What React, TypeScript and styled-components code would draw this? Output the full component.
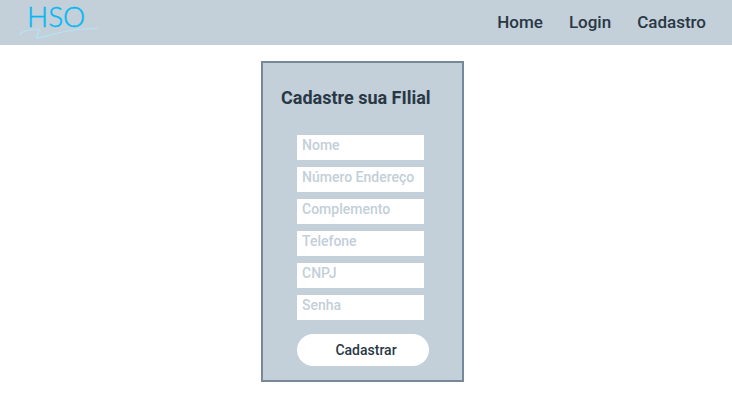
import React from "react";
import styled, { createGlobalStyle } from "styled-components";

const GlobalStyle = createGlobalStyle`
  *, *::before, *::after { box-sizing: border-box; }
  body {
    margin: 0;
    background: #ffffff;
    color: #293845;
    font-family: Roboto, "Liberation Sans", sans-serif;
  }
`;

const Header = styled.header`
  display: flex;
  align-items: center;
  justify-content: space-between;
  height: 45px;
  padding: 0 26px 0 18px;
  background: #c3cfd9;
`;

const LogoLink = styled.a`
  display: block;
  height: 45px;
`;

const Nav = styled.nav`
  display: flex;
  gap: 26px;
  padding-bottom: 2px;
`;

const NavLink = styled.a`
  color: #293845;
  font-size: 17px;
  font-weight: 500;
  line-height: 20px;
  text-decoration: none;
`;

const Main = styled.main`
  display: flex;
  justify-content: center;
  padding: 16px 7px 16px 0;
`;

const Card = styled.form`
  display: flex;
  flex-direction: column;
  align-items: flex-start;
  padding: 24px 33px 14px 34px;
  border: 2px solid #778899;
  background: #c3cfd9;
`;

const Title = styled.h1`
  width: 148px;
  margin: 0 0 26px -16px;
  font-size: 18px;
  font-weight: 700;
  line-height: 22px;
  white-space: nowrap;
`;

const Fields = styled.div`
  display: grid;
  gap: 7px;
  width: 127px;
`;

const Field = styled.input`
  width: 100%;
  height: 25px;
  padding: 0 5px 6px;
  border: 0;
  border-radius: 0;
  outline-color: #778899;
  background: #ffffff;
  color: #293845;
  font: 500 14px/19px Roboto, "Liberation Sans", sans-serif;

  &::placeholder {
    color: #c3cfd9;
    opacity: 1;
  }
`;

const Submit = styled.button`
  width: 132px;
  height: 32px;
  margin-top: 14px;
  padding: 0 0 0 6px;
  border: 0;
  border-radius: 16px;
  background: #ffffff;
  color: #293845;
  font: 500 14px/20px Roboto, "Liberation Sans", sans-serif;
`;

const LogoText = styled.text`
  fill: #00b9f5;
  stroke: #00b9f5;
  stroke-width: 0.4px;
  font-family: Lato, sans-serif;
  font-size: 28px;
  font-weight: 300;
`;

const links = ["Home", "Login", "Cadastro"];

const fields = [
  { label: "Nome", type: "text" },
  { label: "Número Endereço", type: "text" },
  { label: "Complemento", type: "text" },
  { label: "Telefone", type: "tel" },
  { label: "CNPJ", type: "text" },
  { label: "Senha", type: "password" },
];

function Logo() {
  return (
    <svg width="82" height="45" viewBox="18 0 82 45" role="img" aria-label="HSO">
      <LogoText x="27" y="27">HSO</LogoText>
      <path
        d="M20 34.5C22 31 27 29.5 38 29C41 29 37 34 36.5 38C43 38 50 34.5 60 32.5C72 30 84 28.5 97 28.5"
        fill="none"
        stroke="#b3e5f7"
        strokeWidth="1.2"
        strokeLinecap="round"
        strokeLinejoin="round"
      />
    </svg>
  );
}

export default function App() {
  return (
    <>
      <GlobalStyle />
      <Header>
        <LogoLink href="#home">
          <Logo />
        </LogoLink>
        <Nav>
          {links.map((link) => (
            <NavLink key={link} href={"#" + link.toLowerCase()}>
              {link}
            </NavLink>
          ))}
        </Nav>
      </Header>
      <Main>
        <Card onSubmit={(event) => event.preventDefault()}>
          <Title>Cadastre sua FIlial</Title>
          <Fields>
            {fields.map(({ label, type }) => (
              <Field key={label} type={type} placeholder={label} aria-label={label} />
            ))}
          </Fields>
          <Submit type="submit">Cadastrar</Submit>
        </Card>
      </Main>
    </>
  );
}
